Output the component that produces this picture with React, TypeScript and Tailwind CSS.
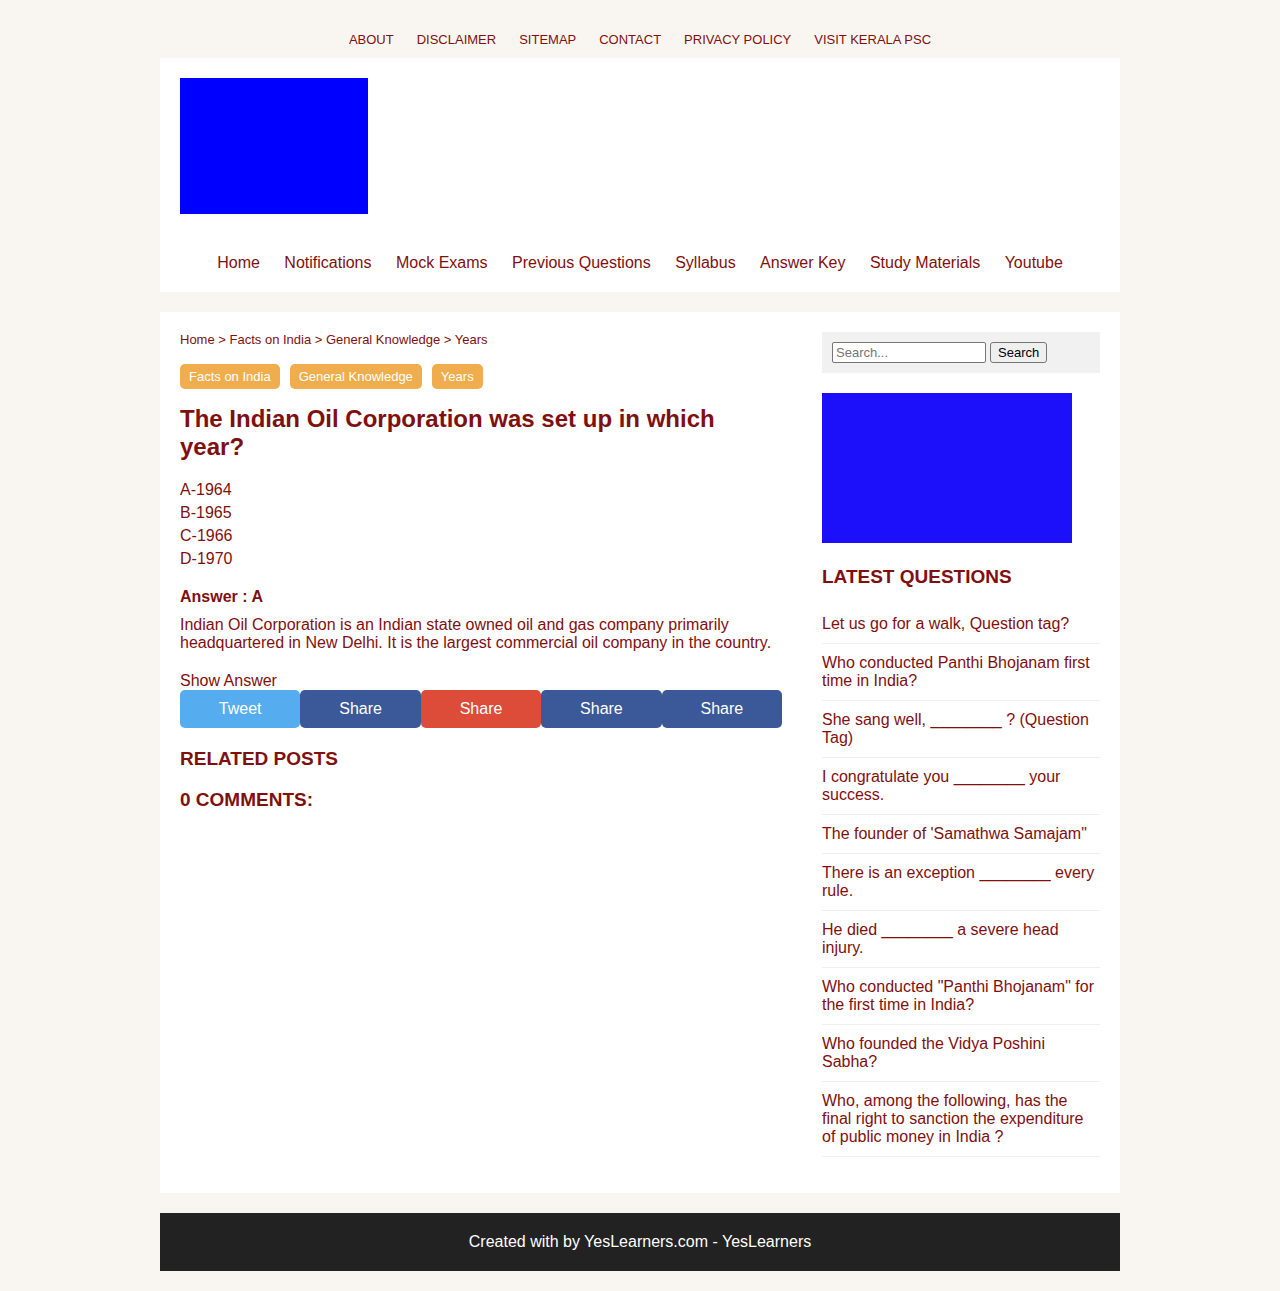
const topLinks = ['About', 'Disclaimer', 'Sitemap', 'Contact', 'Privacy Policy', 'Visit Kerala PSC'];
const mainLinks = ['Home', 'Notifications', 'Mock Exams', 'Previous Questions', 'Syllabus', 'Answer Key', 'Study Materials', 'Youtube'];
const crumbs = ['Home', 'Facts on India', 'General Knowledge', 'Years'];
const labels = ['Facts on India', 'General Knowledge', 'Years'];
const options = ['A-1964', 'B-1965', 'C-1966', 'D-1970'];
const shares = [
  { text: 'Tweet', color: 'bg-[#55acee]' },
  { text: 'Share', color: 'bg-[#3b5998]' },
  { text: 'Share', color: 'bg-[#dd4b39]' },
  { text: 'Share', color: 'bg-[#3b5998]' },
  { text: 'Share', color: 'bg-[#3b5998]' },
];
const latest = [
  'Let us go for a walk, Question tag?',
  'Who conducted Panthi Bhojanam first time in India?',
  'She sang well, ________ ? (Question Tag)',
  'I congratulate you ________ your success.',
  'The founder of \'Samathwa Samajam"',
  'There is an exception ________ every rule.',
  'He died ________ a severe head injury.',
  'Who conducted "Panthi Bhojanam" for the first time in India?',
  'Who founded the Vidya Poshini Sabha?',
  'Who, among the following, has the final right to sanction the expenditure of public money in India ?',
];

export default function App() {
  return (
    <div className="min-h-screen bg-[#f9f6f1] py-5 font-['Liberation_Sans',Arial,sans-serif] text-base leading-[18px] text-[#800f0f]">
      <div className="mx-auto max-w-[960px]">
        <nav aria-label="Pages" className="flex flex-wrap justify-center gap-x-[23px] px-5 pt-3 pb-[11px] text-[13px] leading-[15px] uppercase">
          {topLinks.map((t) => (
            <a key={t} href="#">{t}</a>
          ))}
        </nav>

        <header className="bg-white p-5">
          <div className="h-[136px] w-[188px] bg-[#0000ff]" />
          <nav aria-label="Main" className="mt-10 text-center">
            {mainLinks.map((t) => (
              <span key={t}>
                <a href="#" className="mx-[10px] inline-block">{t}</a>{' '}
              </span>
            ))}
          </nav>
        </header>

        <div className="mt-5 flex gap-10 bg-white p-5">
          <main className="min-w-0 flex-1">
            <nav aria-label="Breadcrumb" className="text-[13px] leading-[15px]">
              {crumbs.map((t, i) => (
                <span key={t}>
                  {i > 0 && ' > '}
                  <a href="#">{t}</a>
                </span>
              ))}
            </nav>
            <div className="mt-[17px] flex flex-wrap gap-[10px] text-[13px] leading-[15px] text-white">
              {labels.map((t) => (
                <a key={t} href="#" className="rounded-[5px] bg-[#f0ad4e] px-[9px] py-[5px]">{t}</a>
              ))}
            </div>
            <h1 className="mt-4 text-2xl leading-7 font-bold">The Indian Oil Corporation was set up in which year?</h1>
            <ul className="mt-5 flex flex-col gap-[5px]">
              {options.map((t) => (
                <li key={t}>{t}</li>
              ))}
            </ul>
            <p className="mt-5 font-bold">Answer : A</p>
            <p className="mt-[10px]">
              Indian Oil Corporation is an Indian state owned oil and gas company primarily headquartered in New Delhi. It is the largest commercial oil company in the country.
            </p>
            <button type="button" className="mt-5 block">Show Answer</button>
            <div className="flex text-center text-white">
              {shares.map((s, i) => (
                <a key={i} href="#" className={`flex-1 rounded-[5px] py-[10px] ${s.color}`}>{s.text}</a>
              ))}
            </div>
            <h2 className="mt-5 text-[19px] leading-[21px] font-bold uppercase">Related Posts</h2>
            <h2 className="mt-5 text-[19px] leading-[21px] font-bold uppercase">0 Comments:</h2>
          </main>

          <aside className="w-[278px] shrink-0">
            <form className="flex gap-1 bg-[#f1f1f1] p-[10px]" onSubmit={(e) => e.preventDefault()}>
              <input
                type="text"
                aria-label="Search"
                placeholder="Search..."
                className="h-[21px] w-[154px] rounded-[2px] border border-[#767676] bg-white px-[3px] text-[13px] leading-[15px] placeholder:text-[#757575]"
              />
              <button type="submit" className="h-[21px] rounded-[3px] border border-[#767676] bg-[#efefef] px-[7px] text-[13px] leading-[15px] text-black">
                Search
              </button>
            </form>
            <div className="mt-5 h-[150px] w-[250px] bg-[#1c0ff9]" />
            <h2 className="mt-[23px] text-[19px] leading-[21px] font-bold uppercase">Latest Questions</h2>
            <ul className="mt-[18px] mb-4">
              {latest.map((t) => (
                <li key={t} className="border-b border-[#eeeeee] py-[10px]">
                  <a href="#">{t}</a>
                </li>
              ))}
            </ul>
          </aside>
        </div>

        <footer className="mt-5 bg-[#222222] p-5 text-center text-white">
          Created with by <a href="#">YesLearners.com</a> - <a href="#">YesLearners</a>
        </footer>
      </div>
    </div>
  );
}
